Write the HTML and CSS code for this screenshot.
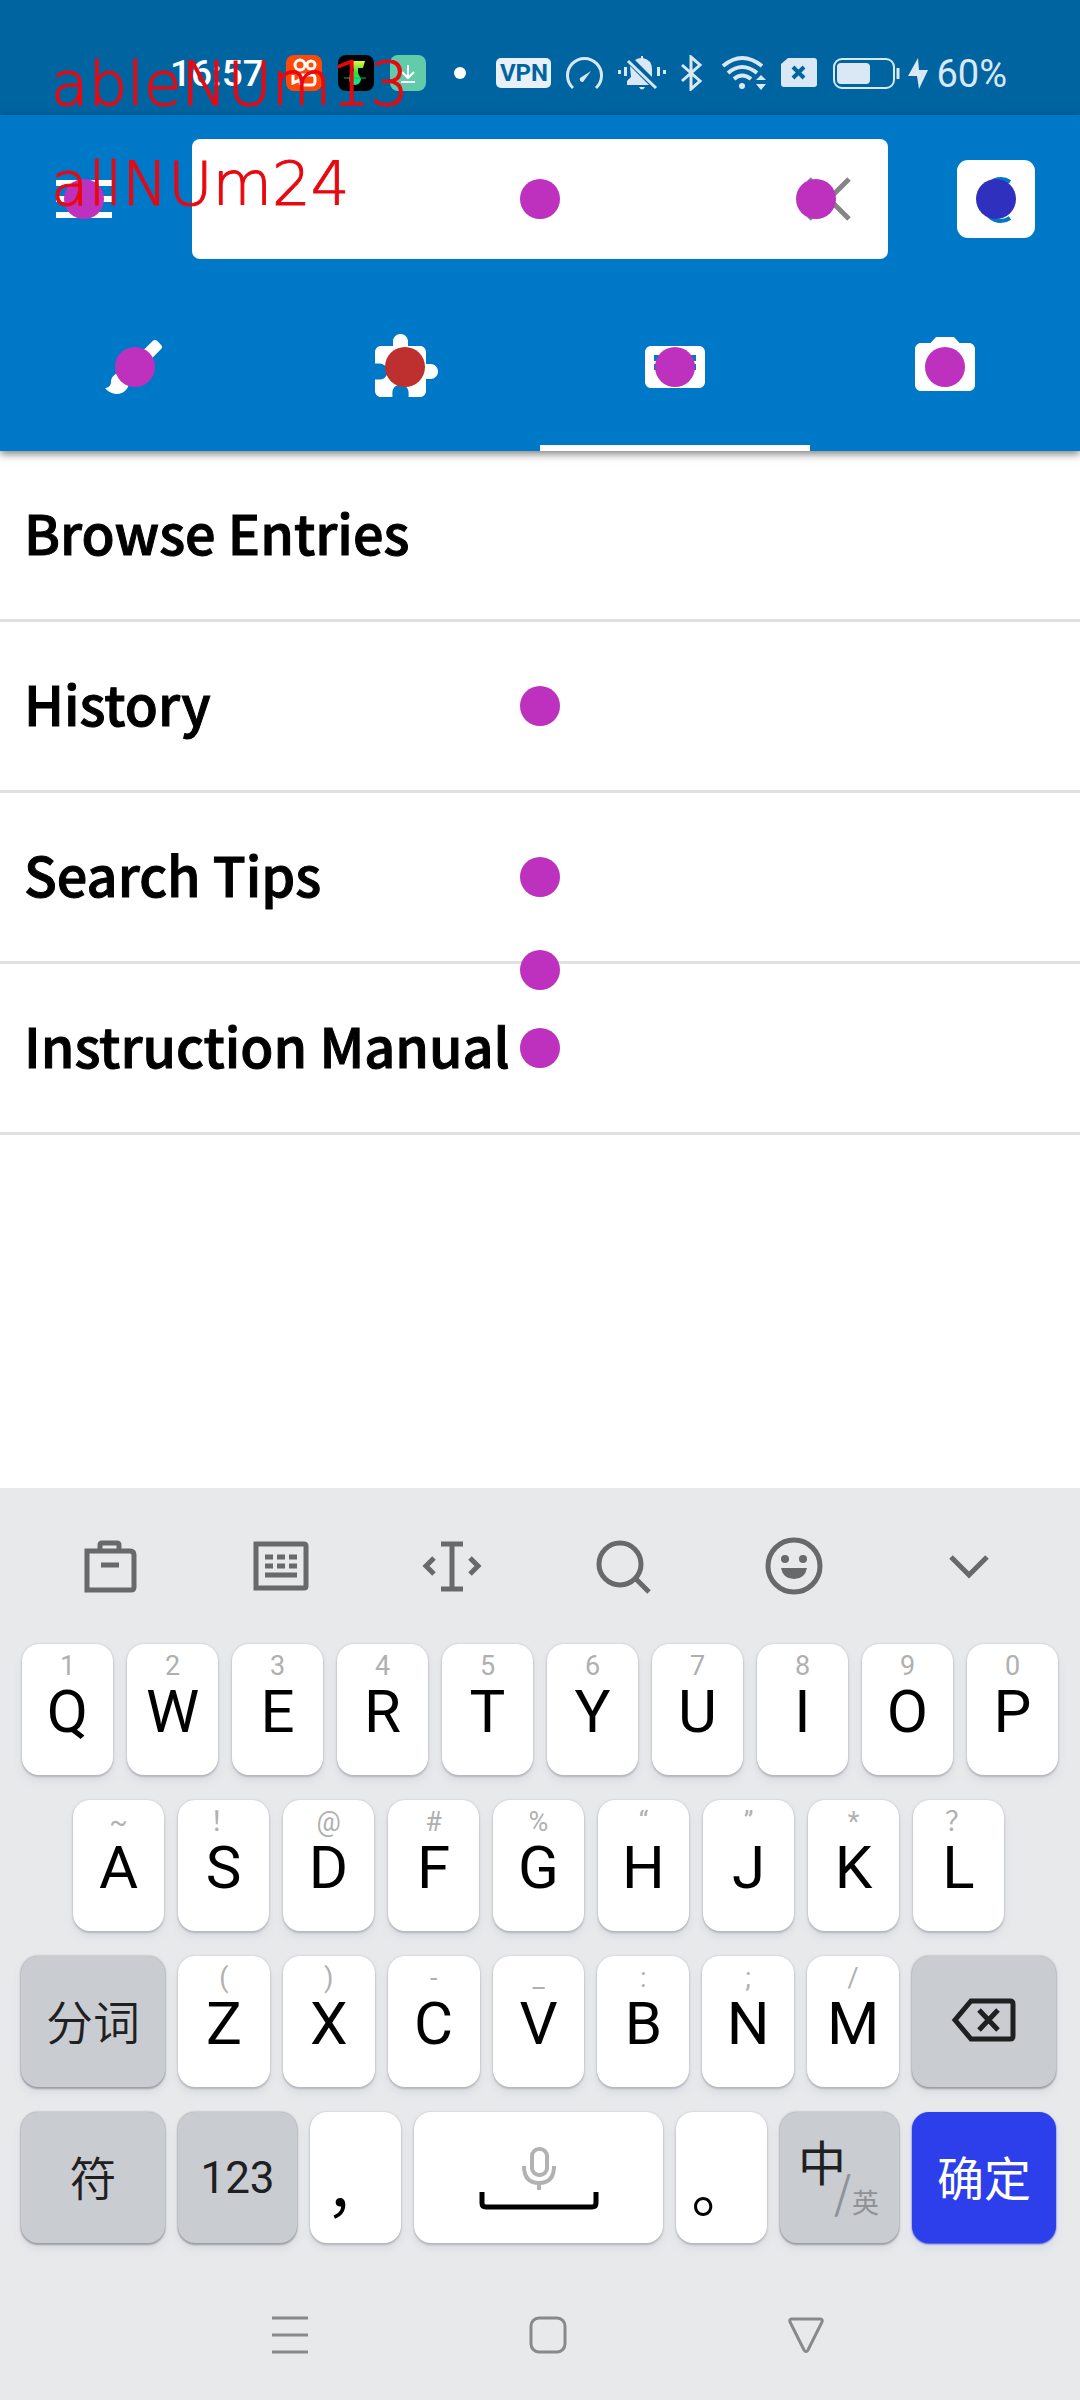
FILE: index.html
```html
<!DOCTYPE html>
<html lang="en">
<head>
<meta charset="utf-8">
<meta name="viewport" content="width=device-width, initial-scale=1">
<title>Dictionary</title>
<link rel="stylesheet" href="styles.css">
</head>
<body>
<div class="screen">
  <div class="status">
    <span class="time">16:57</span>
    <div class="apps">
      <svg width="36" height="36" viewBox="0 0 36 36"><rect width="36" height="36" rx="8" fill="#ff4906"/><g fill="none" stroke="#fff" stroke-width="3"><circle cx="14" cy="10" r="5"/><circle cx="25" cy="10" r="4"/><rect x="14" y="20" width="15" height="10" rx="3"/><path d="M7 20v8l7-3"/></g></svg>
      <svg width="36" height="36" viewBox="0 0 36 36"><defs><linearGradient id="note" x1="0" y1="0" x2="0" y2="1"><stop offset="0" stop-color="#e8f53c"/><stop offset=".5" stop-color="#2be03a"/><stop offset="1" stop-color="#08e8a8"/></linearGradient></defs><rect width="36" height="36" rx="8" fill="#000"/><path d="M14 6h13l-2 7h-5v5l3 6a6 6 0 0 1-12 0l1-5 4-3z" fill="url(#note)"/><path d="M6 23h22" stroke="#19b95b"/></svg>
      <svg width="36" height="36" viewBox="0 0 36 36"><rect width="36" height="36" rx="8" fill="#62cbaa"/><path d="M18 10v12M12 17l6 6 6-6M11 27h14" fill="none" stroke="#fff" stroke-width="2"/></svg>
    </div>
    <span class="more"></span>
    <div class="system">
      <span class="vpn">VPN</span>
      <svg width="37" height="36" viewBox="0 0 37 36"><path d="M7 33a17 17 0 1 1 23 0" fill="none" stroke="#d9e8f4" stroke-width="3"/><path d="M25 16 14 23q-1 4 3 4z" fill="#d9e8f4"/></svg>
      <svg width="48" height="36" viewBox="0 0 48 36" fill="#d9e8f4"><path d="M0 15h3v4H0zM6 12h3v9H6zM39 12h3v9h-3zM45 15h3v4h-3zM21 32h6q-3 5-6 0zM23 1h2v2q9 2 9 11v8L17 5q3-2 6-2zM12 11l19 19H9v-4l4-4z"/><path d="m10 6 28 27" stroke="#d9e8f4" stroke-width="3"/></svg>
      <svg width="22" height="36" viewBox="0 0 22 36"><path d="m1 10 18 16-9 8V2l9 8L1 26" fill="none" stroke="#d9e8f4" stroke-width="3"/></svg>
      <svg width="48" height="36" viewBox="0 0 48 36"><g fill="none" stroke="#d9e8f4" stroke-width="4"><path d="M5 11q19-16 39 0M10 18q14-12 29 0M16 24q8-7 17 0"/></g><circle cx="24" cy="31" r="3" fill="#d9e8f4"/><path d="m43 20 5 5H38zM38 29h10l-5 6z" fill="#d9e8f4"/></svg>
      <svg width="36" height="36" viewBox="0 0 36 36"><path d="M7 3h26q3 0 3 3v23q0 3-3 3H3q-3 0-3-3V9z" fill="#d9e8f4"/><path d="m12 12 11 11M23 12 12 23" stroke="#0064a1" stroke-width="4"/></svg>
      <div class="battery">
        <svg width="68" height="36" viewBox="0 0 68 36"><rect x="2" y="4" width="60" height="29" rx="8" fill="none" stroke="#d9e8f4" stroke-width="2"/><rect x="5" y="8" width="33" height="21" rx="4" fill="#d9e8f4"/><path d="M66 13v11" stroke="#d9e8f4" stroke-width="3"/></svg>
        <svg width="20" height="36" viewBox="0 0 20 36"><path d="M10 3 0 21h9l2 13 9-19h-9z" fill="#d9e8f4"/></svg>
        <span class="percent">60%</span>
      </div>
    </div>
  </div>

  <header class="header">
    <div class="bar">
      <button class="menu" aria-label="Menu"><svg width="56" height="38" viewBox="0 0 56 38"><path d="M0 3h56M0 19h56M0 35h56" stroke="#fff" stroke-width="6"/></svg><i class="dot"></i></button>
      <div class="search">
        <input class="field" type="text" aria-label="Search">
        <i class="dot"></i>
        <button class="clear" aria-label="Clear"><svg width="44" height="44" viewBox="0 0 44 44"><path d="m2 2 40 40M42 2 2 42" stroke="#858585" stroke-width="5"/></svg><i class="dot"></i></button>
      </div>
      <button class="lookup" aria-label="Look up"><svg width="50" height="50" viewBox="0 0 50 50"><path d="M39 8a18 21 0 1 0 0 36" fill="none" stroke="#0078c8" stroke-width="4"/></svg><i class="dot blue"></i></button>
    </div>
    <nav class="tabs">
      <button class="tab" aria-label="Draw"><svg class="glyph" viewBox="0 0 24 24"><path d="M7 14c-1.66 0-3 1.34-3 3 0 1.31-1.16 2-2 2 .92 1.22 2.49 2 4 2 2.21 0 4-1.79 4-4 0-1.66-1.34-3-3-3zm13.71-9.37l-1.34-1.34c-.39-.39-1.02-.39-1.41 0L9 12.25 11.75 15l8.96-8.96c.39-.39.39-1.02 0-1.41z"/></svg><i class="dot"></i></button>
      <button class="tab" aria-label="Parts"><svg class="glyph" viewBox="0 0 24 24"><path d="M20.5 11H19V7c0-1.1-.9-2-2-2h-4V3.5C13 2.12 11.88 1 10.5 1S8 2.12 8 3.5V5H4c-1.1 0-1.99.9-1.99 2v3.8H3.5c1.49 0 2.7 1.21 2.7 2.7s-1.21 2.7-2.7 2.7H2V20c0 1.1.9 2 2 2h3.8v-1.5c0-1.49 1.21-2.7 2.7-2.7 1.49 0 2.7 1.21 2.7 2.7V22H17c1.1 0 2-.9 2-2v-4h1.5c1.38 0 2.5-1.12 2.5-2.5S21.88 11 20.5 11z"/></svg><i class="dot red"></i></button>
      <button class="tab active" aria-label="Keyboard"><svg class="glyph" viewBox="0 0 24 24"><path d="M20 5H4c-1.1 0-1.99.9-1.99 2L2 17c0 1.1.9 2 2 2h16c1.1 0 2-.9 2-2V7c0-1.1-.9-2-2-2zm-9 3h2v2h-2V8zm0 3h2v2h-2v-2zM8 8h2v2H8V8zm0 3h2v2H8v-2zm-1 2H5v-2h2v2zm0-3H5V8h2v2zm9 7H8v-2h8v2zm0-4h-2v-2h2v2zm0-3h-2V8h2v2zm3 3h-2v-2h2v2zm0-3h-2V8h2v2z"/></svg><i class="dot"></i></button>
      <button class="tab" aria-label="Camera"><svg class="glyph" viewBox="0 0 24 24"><path d="M9 2L7.17 4H4c-1.1 0-2 .9-2 2v12c0 1.1.9 2 2 2h16c1.1 0 2-.9 2-2V6c0-1.1-.9-2-2-2h-3.17L15 2H9z"/></svg><i class="dot"></i></button>
    </nav>
  </header>

  <main class="content">
    <a class="row" href="#browse">Browse Entries</a>
    <a class="row" href="#history">History<i class="dot"></i></a>
    <a class="row" href="#tips">Search Tips<i class="dot"></i></a>
    <a class="row" href="#manual">Instruction Manual<i class="dot"></i></a>
    <i class="dot"></i>
  </main>

  <section class="keyboard" aria-label="Keyboard">
    <div class="tools">
      <button class="tool" aria-label="Toolbox"><svg width="60" height="60" viewBox="0 0 60 60"><path d="M7 15h43q4 0 4 4v32q0 3-3 3H7zM20 14V9q0-2 2-2h15q2 0 2 2v5M21 29h18"/></svg></button>
      <button class="tool" aria-label="Layout"><svg width="60" height="60" viewBox="0 0 60 60"><path d="M5 8h48q2 0 2 2v40q0 2-2 2H5zM14 21h8m4 0h8m4 0h8M14 30h8m4 0h8m4 0h8M14 39h32"/></svg></button>
      <button class="tool" aria-label="Move cursor"><svg width="60" height="60" viewBox="0 0 60 60"><path d="M19 8h22M19 53h22M30 8v45M12 22l-8 8 8 8M48 22l8 8-8 8"/></svg></button>
      <button class="tool" aria-label="Search"><svg width="60" height="60" viewBox="0 0 60 60"><circle cx="27" cy="28" r="21"/><path d="m42 42 14 14"/></svg></button>
      <button class="tool" aria-label="Emoji"><svg width="60" height="60" viewBox="0 0 60 60"><circle cx="30" cy="30" r="26"/><g fill="#68696b" stroke="none"><circle cx="21" cy="23" r="4"/><circle cx="39" cy="23" r="4"/><path d="M17 32h26q-2 11-13 11T17 32z"/></g></svg></button>
      <button class="tool" aria-label="Hide keyboard"><svg width="60" height="60" viewBox="0 0 60 60"><path d="m12 21 18 18 18-18"/></svg></button>
    </div>
    <div class="keys">
      <div class="line line-top">
        <button class="key"><small>1</small><b>Q</b></button>
        <button class="key"><small>2</small><b>W</b></button>
        <button class="key"><small>3</small><b>E</b></button>
        <button class="key"><small>4</small><b>R</b></button>
        <button class="key"><small>5</small><b>T</b></button>
        <button class="key"><small>6</small><b>Y</b></button>
        <button class="key"><small>7</small><b>U</b></button>
        <button class="key"><small>8</small><b>I</b></button>
        <button class="key"><small>9</small><b>O</b></button>
        <button class="key"><small>0</small><b>P</b></button>
      </div>
      <div class="line line-middle">
        <button class="key"><small>~</small><b>A</b></button>
        <button class="key"><small>！</small><b>S</b></button>
        <button class="key"><small>@</small><b>D</b></button>
        <button class="key"><small>#</small><b>F</b></button>
        <button class="key"><small>%</small><b>G</b></button>
        <button class="key"><small>“</small><b>H</b></button>
        <button class="key"><small>”</small><b>J</b></button>
        <button class="key"><small>*</small><b>K</b></button>
        <button class="key"><small>？</small><b>L</b></button>
      </div>
      <div class="line">
        <button class="key side">分词</button>
        <button class="key"><small>(</small><b>Z</b></button>
        <button class="key"><small>)</small><b>X</b></button>
        <button class="key"><small>-</small><b>C</b></button>
        <button class="key"><small>_</small><b>V</b></button>
        <button class="key"><small>:</small><b>B</b></button>
        <button class="key"><small>;</small><b>N</b></button>
        <button class="key"><small>/</small><b>M</b></button>
        <button class="key side" aria-label="Backspace"><svg width="66" height="44" viewBox="0 0 66 44"><path d="M20 3h39q3 0 3 3v32q0 3-3 3H20L4 22zM28 12l19 20M47 12 28 32" fill="none" stroke="#1f2021" stroke-width="5"/></svg></button>
      </div>
      <div class="line">
        <button class="key side">符</button>
        <button class="key mode digits">123</button>
        <button class="key mark"><b>，</b></button>
        <button class="key space" aria-label="Space"><svg width="120" height="64" viewBox="0 0 120 64"><g fill="none" stroke="#b2b2b2" stroke-width="4"><rect x="53" y="3" width="15" height="26" rx="7"/><path d="M45 20q0 17 15 17t15-17M60 37v7"/></g><path d="M3 46v11q0 4 4 4h106q4 0 4-4V46" fill="none" stroke="#000" stroke-width="5"/></svg></button>
        <button class="key mark"><b>。</b></button>
        <button class="key mode language"><span class="zh">中</span><span class="slash">/</span><span class="en">英</span></button>
        <button class="key side confirm">确定</button>
      </div>
    </div>
    <div class="nav">
      <button class="navkey" aria-label="Recent"><svg width="36" height="38" viewBox="0 0 36 38"><path d="M0 2h36M0 19h36M0 36h36"/></svg></button>
      <button class="navkey" aria-label="Home"><svg width="38" height="38" viewBox="0 0 38 38"><rect x="2" y="2" width="34" height="34" rx="8"/></svg></button>
      <button class="navkey" aria-label="Back"><svg width="36" height="38" viewBox="0 0 36 38"><path d="M4 3h28q3 0 2 3L20 34q-2 3-4 0L2 6q-1-3 2-3z"/></svg></button>
    </div>
  </section>

  <div class="counts"><div>ableNUm13</div><div>allNUm24</div></div>
</div>
</body>
</html>
```
FILE: styles.css
```css
* { box-sizing: border-box; }
body { margin: 0; background: #fff; color: #000; font-family: Roboto, "Noto Sans CJK SC", sans-serif; }
button { border: 0; padding: 0; margin: 0; background: none; color: inherit; font: inherit; }
svg { display: block; flex: none; }

.screen { position: relative; display: flex; flex-direction: column; min-height: 100vh; }

.status { display: flex; align-items: center; height: 115px; padding: 30px 73px 0 170px; background: #0064a1; color: #fff; }
.time { width: 92px; padding-top: 2px; font-size: 37px; line-height: 40px; font-weight: 500; }
.apps { display: flex; gap: 16px; margin-left: 24px; }
.more { width: 12px; height: 12px; margin-left: 28px; border-radius: 50%; background: #fff; }
.system { display: flex; align-items: center; gap: 15px; margin-left: auto; color: #d9e8f4; }
.vpn { width: 55px; height: 30px; border-radius: 5px; background: #e8f0f8; color: #0064a1; font: 700 24px/30px Roboto, sans-serif; text-align: center; }
.battery { display: flex; align-items: center; gap: 8px; }
.percent { padding-top: 3px; font-size: 38px; line-height: 40px; }

.header { position: relative; z-index: 1; background: #0078c8; box-shadow: 0 3px 8px rgba(0, 0, 0, .5); }
.bar { display: flex; align-items: center; height: 168px; padding: 0 45px 0 56px; }
.menu { position: relative; width: 56px; margin-right: 80px; }
.search { position: relative; flex: 1; height: 120px; margin-right: 69px; }
.field { display: block; width: 100%; height: 100%; padding: 0 144px 0 24px; border: 0; border-radius: 8px; background: #fff; font: 48px Roboto, sans-serif; }
.clear { position: absolute; top: 0; right: 0; width: 144px; height: 120px; display: flex; align-items: center; justify-content: center; padding-left: 26px; }
.lookup { position: relative; display: flex; align-items: center; justify-content: center; width: 78px; height: 78px; border-radius: 11px; background: #fff; }

.dot { position: absolute; top: 50%; left: 50%; width: 40px; height: 40px; margin: -20px 0 0 -20px; border-radius: 50%; background: #be30be; }
.dot.red { background: #be3030; }
.dot.blue { background: #3030be; }

.tabs { display: grid; grid-template-columns: repeat(4, 1fr); height: 168px; }
.tab { position: relative; display: flex; align-items: center; justify-content: center; }
.tab.active { box-shadow: inset 0 -6px #fff; }
.glyph { width: 72px; height: 72px; fill: #fff; }

.content { position: relative; flex: 1; }
.row { position: relative; display: flex; align-items: center; height: 171px; padding: 0 24px 6px; border-bottom: 3px solid #e0e0e0; color: #000; font: 500 54px/80px "Noto Sans CJK SC", sans-serif; -webkit-text-stroke: 1px #000; text-decoration: none; }

.keyboard { background: #e8e9eb; }
.tools { display: grid; grid-template-columns: repeat(5, 171fr) 180fr; height: 156px; padding: 0 21px 0 24px; }
.tool { display: flex; align-items: center; justify-content: center; }
.tool svg { fill: none; stroke: #68696b; stroke-width: 5px; }
.keys { display: flex; flex-direction: column; gap: 25px; }
.line { display: flex; gap: 13px; padding: 0 24px 0 21px; }
.line-top { gap: 14px; padding: 0 22px; }
.line-middle { gap: 14px; padding: 0 76px 0 73px; }
.key { flex: 1; min-width: 0; height: 131px; display: flex; flex-direction: column; align-items: center; padding-top: 6px; border-radius: 17px; background: #fff; box-shadow: 0 0 2px #b8babe, 0 2px 2px #b4b6ba, 0 6px 8px #d8dbe1; }
.key small { height: 32px; color: #b0b0b0; font-size: 27px; line-height: 32px; font-weight: 400; }
.key b { height: 60px; font-size: 60px; line-height: 60px; font-weight: 400; }
.side, .mode { flex: none; justify-content: center; padding: 0; background: #c9ccd1; color: #1f2021; box-shadow: 0 0 2px #8c8f94, 0 2px 2px #a0a3a8, 0 6px 8px #d8dbe1; }
.side { width: 144px; padding-bottom: 4px; font: 350 47px/60px "Noto Sans CJK SC", sans-serif; }
.mode { width: 119px; }
.digits { font-size: 44px; }
.mark { flex: none; width: 91px; padding-top: 44px; }
.mark b { font-family: "Noto Sans CJK SC", sans-serif; }
.space { justify-content: center; padding: 0; }
.language { position: relative; font-family: "Noto Sans CJK SC", sans-serif; }
.zh, .slash, .en { position: absolute; }
.zh { top: 18px; left: 18px; font-size: 48px; line-height: 60px; }
.slash { top: 54px; left: 54px; color: #8f9296; font: 400 44px/48px "Noto Sans CJK SC", sans-serif; }
.en { top: 74px; left: 72px; color: #8f9296; font-size: 27px; line-height: 32px; }
.confirm { background: #2d3feb; color: #fff; font-weight: 400; box-shadow: 0 1px 2px #2d3feb, 0 6px 8px #d8dbe1; }

.nav { display: grid; grid-template-columns: repeat(3, 1fr); height: 157px; padding: 26px 145px 0 161px; }
.navkey { display: flex; align-items: center; justify-content: center; }
.navkey svg { fill: none; stroke: #88898b; stroke-width: 3px; }

.counts { position: absolute; z-index: 2; top: 34px; left: 51px; color: #e80810; font: 200 61px/100px "DejaVu Sans Light", "DejaVu Sans", sans-serif; -webkit-text-stroke: 1px #e80810; pointer-events: none; }
```
